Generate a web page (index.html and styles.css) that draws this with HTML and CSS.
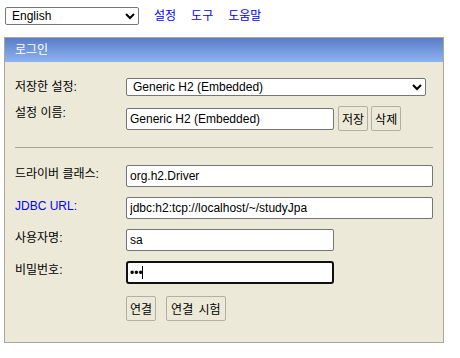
FILE: index.html
```
<!DOCTYPE html>
<html lang="ko">
<head>
<meta charset="utf-8">
<title>H2 Console</title>
<link rel="stylesheet" href="styles.css">
</head>
<body>
<div class="topbar">
  <select class="lang"><option>English</option></select>
  <a class="toplink" href="#">설정</a>
  <a class="toplink" href="#">도구</a>
  <a class="toplink" href="#">도움말</a>
</div>
<div class="panel">
  <div class="panel-head">로그인</div>
  <div class="panel-body">
    <div class="row row-sel">
      <div class="label">저장한 설정:</div>
      <select class="field-sel"><option>Generic H2 (Embedded)</option></select>
    </div>
    <div class="row row-name">
      <div class="label">설정 이름:</div>
      <div class="inline">
        <input class="inp inp-short" type="text" value="Generic H2 (Embedded)">
        <button class="btn btn-save">저장</button>
        <button class="btn">삭제</button>
      </div>
    </div>
    <div class="sep"></div>
    <div class="row">
      <div class="label">드라이버 클래스:</div>
      <input class="inp inp-wide" type="text" value="org.h2.Driver">
    </div>
    <div class="row">
      <div class="label label-link">JDBC URL:</div>
      <input class="inp inp-wide" type="text" value="jdbc:h2:tcp://localhost/~/studyJpa">
    </div>
    <div class="row">
      <div class="label">사용자명:</div>
      <input class="inp inp-short" type="text" value="sa">
    </div>
    <div class="row">
      <div class="label">비밀번호:</div>
      <span class="pw-wrap"><input class="inp inp-short inp-focus" type="password" value="abc"></span>
    </div>
    <div class="row row-btns">
      <div class="label"></div>
      <div class="inline btns">
        <button class="btn">연결</button>
        <button class="btn btn-test">연결 시험</button>
      </div>
    </div>
  </div>
</div>
</body>
</html>
```
FILE: styles.css
```
html, body {
  background: #ffffff;
}
body {
  margin: 0;
  padding: 7px 0 0 4px;
  font-family: "Liberation Sans", Arial, "Noto Sans CJK KR", sans-serif;
  font-size: 12px;
  line-height: 15px;
  color: #000;
}
.topbar {
  display: flex;
  align-items: center;
  height: 18px;
  padding-left: 1px;
}
.lang {
  width: 134px;
  height: 18px;
  font-family: "Liberation Sans", Arial, sans-serif;
  font-size: 12px;
  margin: 0 15px 0 0;
  padding: 0 0 0 2px;
  border: 1px solid #767676;
  border-radius: 2px;
  background: #fff;
  color: #000;
}
.toplink {
  color: #0000ff;
  text-decoration: none;
  margin-right: 15px;
}
.panel {
  margin-top: 12px;
  width: 440px;
  box-sizing: border-box;
  border: 1px solid #aca899;
  background: #ece9d8;
}
.panel-head {
  height: 24px;
  line-height: 24px;
  padding-left: 10px;
  color: #fff;
  background: linear-gradient(to bottom, #5b7cc6, #8cb4f2);
}
.panel-body {
  padding: 16px 10px 21px 10px;
  display: flex;
  flex-direction: column;
}
.row {
  display: flex;
  align-items: flex-start;
  margin-top: 10px;
}
.row-sel {
  margin-top: 0;
  align-items: center;
}
.label {
  width: 111px;
  flex: none;
  padding-top: 2px;
}
.row-sel .label {
  padding-top: 0;
}
.row-name .label {
  padding-top: 0;
}
.label-link {
  color: #0000ff;
}
.field-sel {
  width: 300px;
  height: 18px;
  margin: 0;
  padding: 0 0 0 2px;
  font-family: "Liberation Sans", Arial, sans-serif;
  font-size: 12px;
  border: 1px solid #767676;
  border-radius: 2px;
  background: #fff;
  color: #000;
}
.inline {
  display: flex;
  align-items: center;
}
.inp {
  box-sizing: border-box;
  height: 22px;
  margin: 0;
  padding: 0 3px;
  font-family: "Liberation Sans", Arial, sans-serif;
  font-size: 12px;
  color: #000;
  background: #fff;
  border: 1px solid #767676;
  border-radius: 2px;
  outline: none;
}
.inp-wide {
  width: 308px;
}
.inp-short {
  width: 208px;
}
.inp-focus {
  border: 2px solid #101010;
  border-radius: 3px;
  padding: 0 2px;
  height: 23px;
}
.pw-wrap {
  position: relative;
  display: inline-block;
}
.pw-wrap::after {
  content: "";
  position: absolute;
  left: 16px;
  top: 5px;
  width: 1px;
  height: 13px;
  background: #000;
}
.btn {
  box-sizing: border-box;
  height: 25px;
  margin: 0;
  padding: 0 3px;
  font-family: "Liberation Sans", Arial, "Noto Sans CJK KR", sans-serif;
  font-size: 12px;
  color: #000;
  background: #ece9d8;
  border: 1px solid #b3afa2;
  border-radius: 2px;
}
.inline .btn + .btn {
  margin-left: 3px;
}
.btn-save {
  margin-left: 4px;
}
.btns .btn + .btn {
  margin-left: 10px;
}
.btn-test {
  word-spacing: 2px;
  padding: 0 4px;
}
.row-name {
  margin-top: 10px;
}
.sep {
  height: 1px;
  background: #a6a396;
  margin-top: 16px;
  margin-bottom: 7px;
}
.row-btns {
  margin-top: 12px;
}
```
